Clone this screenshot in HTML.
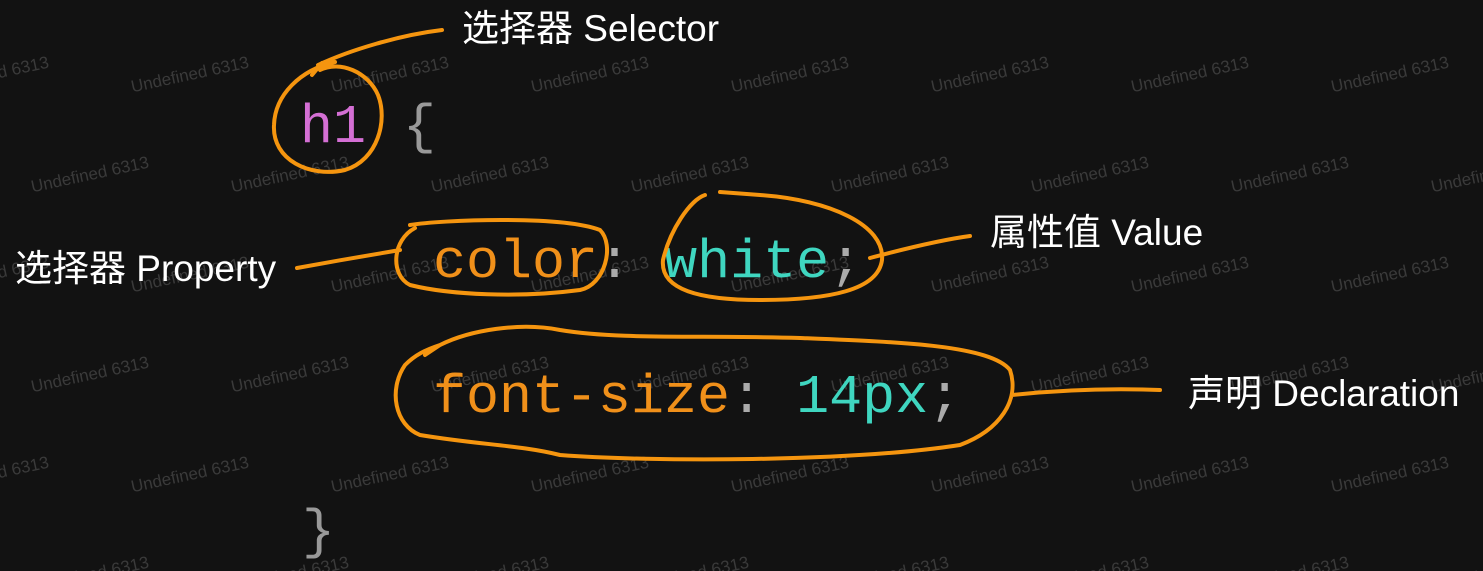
<!DOCTYPE html>
<html><head><meta charset="utf-8"><style>
html,body{margin:0;padding:0;background:#121212;width:1483px;height:571px;overflow:hidden;position:relative}
.wm{position:absolute;font-family:"Liberation Sans",sans-serif;font-size:17px;color:#3a3a3a;transform:rotate(-12deg);white-space:nowrap}
.code{position:absolute;font-family:"Liberation Mono",monospace;font-size:55px;white-space:pre;line-height:1}
.lab{position:absolute;font-family:"Liberation Sans","Noto Sans CJK SC",sans-serif;font-size:37px;color:#fff;white-space:nowrap;line-height:1}
</style></head><body>
<div id="wms"></div>
<script>
var h='';for(var r=0;r<7;r++){var y=-35+r*100;var off=(r%2==0)?30:130;for(var x=off-400;x<1550;x+=200){h+='<div class="wm" style="left:'+x+'px;top:'+y+'px">Undefined 6313</div>';}}
document.getElementById('wms').innerHTML=h;
</script>
<div class="code" style="left:300px;top:100px;color:#d46fd4">h1</div>
<div class="code" style="left:403px;top:100px;color:#999">{</div>
<div class="code" style="left:433px;top:235px;color:#f0901a">color<span style="color:#aaa">:</span> <span style="color:#3fd6c0">white</span><span style="color:#aaa">;</span></div>
<div class="code" style="left:433px;top:370px;color:#f0901a">font-size<span style="color:#aaa">:</span> <span style="color:#3fd6c0">14px</span><span style="color:#aaa">;</span></div>
<div class="code" style="left:302px;top:505px;color:#999">}</div>
<div class="lab" style="left:462px;top:10px">选择器 Selector</div>
<div class="lab" style="left:990px;top:214px">属性值 Value</div>
<div class="lab" style="left:15px;top:250px">选择器 Property</div>
<div class="lab" style="left:1188px;top:375px">声明 Declaration</div>
<svg width="1483" height="571" style="position:absolute;left:0;top:0" fill="none" stroke="#f5950f" stroke-width="4" stroke-linecap="round">
<path d="M442 30 C400 35 350 50 318 65 M335 62 C300 70 275 95 274 125 C272 160 310 178 345 170 C378 160 388 120 378 95 C368 72 340 60 320 70"/>
<path d="M322 63 L312 75"/>
<path d="M297 268 C330 262 370 255 400 250 M410 225 C440 220 560 215 600 230 C615 245 605 285 580 290 C520 298 450 295 410 285 C390 275 392 240 415 228"/>
<path d="M705 195 C690 200 670 230 663 260 C660 290 700 300 760 300 C830 300 878 290 882 260 C885 225 830 200 760 195 L720 192 M870 258 C900 250 940 240 970 236"/>
<path d="M425 355 L440 345 C470 330 520 322 560 330 C620 340 700 335 800 338 C900 342 990 345 1010 370 C1020 400 1000 430 960 445 C850 462 650 462 560 455 C520 445 480 445 420 435 C395 425 388 390 405 365 C415 355 425 350 440 345 M1012 395 C1060 390 1110 388 1160 390"/>
</svg>
</body></html>
